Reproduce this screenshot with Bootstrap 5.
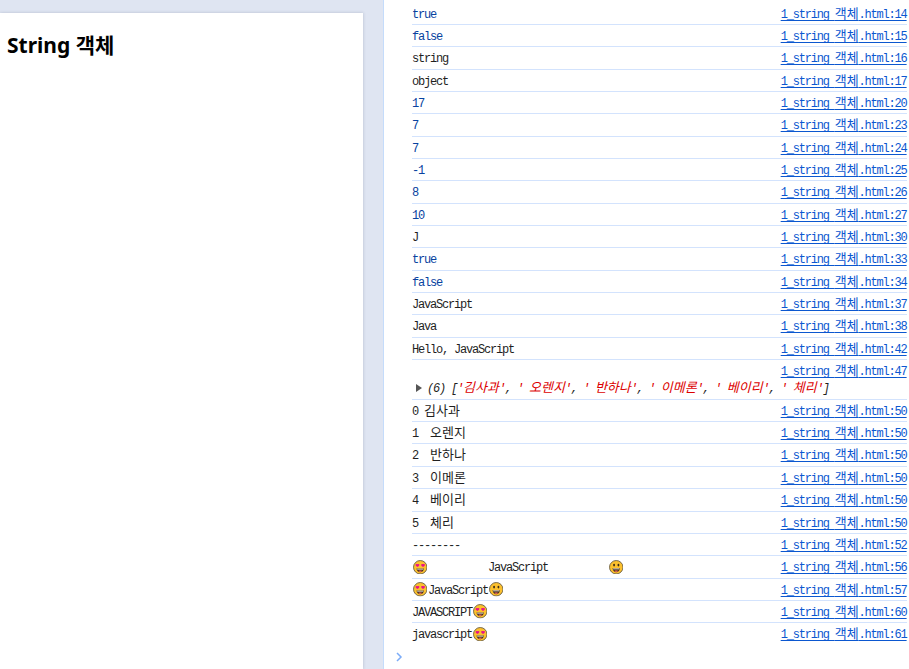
<!doctype html>
<html lang="ko"><head><meta charset="utf-8">
<link href="https://cdn.jsdelivr.net/npm/bootstrap@5.3.0/dist/css/bootstrap.min.css" rel="stylesheet">
<style>
html,body{height:100%;overflow:hidden}
body{background:#dfe5f2;font-family:"Liberation Sans","Noto Sans CJK KR",sans-serif}
.shell{height:669px}
.page-pane{width:383px;flex:none}
.page-sheet{width:363px;margin-top:13px;height:656px;background:#fff;box-shadow:0 0 3px rgba(60,70,100,.25)}
.page-title{font-family:"Noto Sans","Noto Sans CJK KR",sans-serif;font-size:21px;font-weight:700;color:#000;margin:0;padding:19px 0 0 7px;line-height:26px}
.console{width:526px;background:#fff;border-left:1px solid #c5dcfb;padding:2.6px 2px 0 28px;font-family:"Liberation Mono","Noto Sans CJK KR",monospace;font-size:12px;letter-spacing:-1.2px;color:#1f1f1f}
.log-row{height:22.35px;border-bottom:1px solid #d3e3fd;line-height:21px;white-space:pre;padding-top:2px}
.log-row:last-child{border-bottom:0}
.log-row.tall{height:39.7px;display:block}
.src{color:#0b57d0;text-decoration:underline;text-decoration-skip-ink:none;text-underline-offset:2px;flex:none;margin-right:.4px}
.val{color:#0842a0}
.ko{font-size:13px;letter-spacing:0;line-height:1}
.array-line{font-style:italic;line-height:14px;padding-left:4px;margin-top:-1px;color:#1f1f1f}
.array-line .str{color:#dc0000}
.tri{display:inline-block;width:0;height:0;border-left:6px solid #555;border-top:4px solid transparent;border-bottom:4px solid transparent;margin-right:5px}
.emo{width:14.5px;height:14.500px;vertical-align:-3px;margin:0 .8px;flex:none}
.prompt{width:8px;height:10px;position:absolute;left:395px;top:652px}
</style></head><body>
<svg width="0" height="0" class="position-absolute">
<defs>
<symbol id="heart" viewBox="0 0 14 14"><circle cx="7" cy="7" r="6.5" fill="#fcc02c" stroke="#6f6248" stroke-width=".9"/><path d="M2.400 4.600c.2-1.100 1.500-1 1.900-.4.400-.6 1.700-.7 1.900.4.100.8-1 1.500-1.900 2.100-.9-.6-2-1.300-1.900-2.100zM7.800 4.600c.2-1.100 1.500-1 1.900-.4.400-.6 1.700-.7 1.900.4.100.8-1 1.500-1.900 2.100-.9-.6-2-1.300-1.900-2.100z" fill="#e8128a"/><path d="M3.400 8.200h7.200c-.2 2.200-1.700 3.600-3.600 3.600S3.600 10.400 3.400 8.200z" fill="#43301f"/><path d="M4 8.400h6v.7H4z" fill="#fff"/><path d="M5.100 10.600c1.100-.6 2.700-.6 3.800 0-.5.700-1.200 1.100-1.900 1.100s-1.400-.4-1.900-1.100z" fill="#e8685a"/></symbol>
<symbol id="grin" viewBox="0 0 14 14"><circle cx="7" cy="7" r="6.5" fill="#fcc02c" stroke="#6f6248" stroke-width=".9"/><ellipse cx="4.900" cy="4.900" rx=".9" ry="1.300" fill="#3b2a15"/><ellipse cx="9.100" cy="4.900" rx=".9" ry="1.300" fill="#3b2a15"/><path d="M3.400 8h7.200c-.2 2.300-1.700 3.800-3.600 3.800S3.600 10.300 3.400 8z" fill="#43301f"/><path d="M4 8.200h6v.7H4z" fill="#fff"/><path d="M5.100 10.600c1.100-.6 2.700-.6 3.800 0-.5.700-1.200 1.100-1.900 1.100s-1.400-.4-1.900-1.100z" fill="#e8685a"/></symbol>
</defs></svg>
<div class="shell d-flex">
<div class="page-pane"><div class="page-sheet"><h1 class="page-title">String 객체</h1></div></div>
<div class="console" id="c"></div>
</div>
<svg class="prompt" viewBox="0 0 8 10"><path d="M2 1l4 4-4 4" fill="none" stroke="#7cacf8" stroke-width="1.500"/></svg>
<script>
const ko=s=>s.replace(/[\uAC00-\uD7A3]+/g,m=>'<span class="ko">'+m+'</span>');
const H='<svg class="emo"><use href="#heart"/></svg>',G='<svg class="emo"><use href="#grin"/></svg>';
const link=n=>'<a class="src">'+ko('1_string 객체.html:'+n)+'</a>';
const rows=[['true',14,1],['false',15,1],['string',16],['object',17],['17',20,1],['7',23,1],['7',24,1],['-1',25,1],['8',26,1],['10',27,1],['J',30],['true',33,1],['false',34,1],['JavaScript',37],['Java',38],['Hello, JavaScript',42],null,['0 김사과',50],['1  오렌지',50],['2  반하나',50],['3  이메론',50],['4  베이리',50],['5  체리',50],['--------',52],
[H+'          JavaScript          '+G,56,2],[H+'JavaScript'+G,57,2],['JAVASCRIPT'+H,60,2],['javascript'+H,61,2]];
let out='';
for(const r of rows){
 if(!r){
  const parts=['김사과',' 오렌지',' 반하나',' 이메론',' 베이리',' 체리'].map(s=>"<span class=\"str\">'"+ko(s)+"'</span>").join(', ');
  out+='<div class="log-row tall"><div class="text-end">'+link(47)+'</div><div class="array-line"><i class="tri"></i>(6) ['+parts+']</div></div>';
  continue;
 }
 out+='<div class="log-row d-flex justify-content-between"><span class="'+(r[2]===1?'val':'')+'">'+(r[2]===2?r[0]:ko(r[0]))+'</span>'+link(r[1])+'</div>';
}
document.getElementById('c').innerHTML=out;
</script>
</body></html>
